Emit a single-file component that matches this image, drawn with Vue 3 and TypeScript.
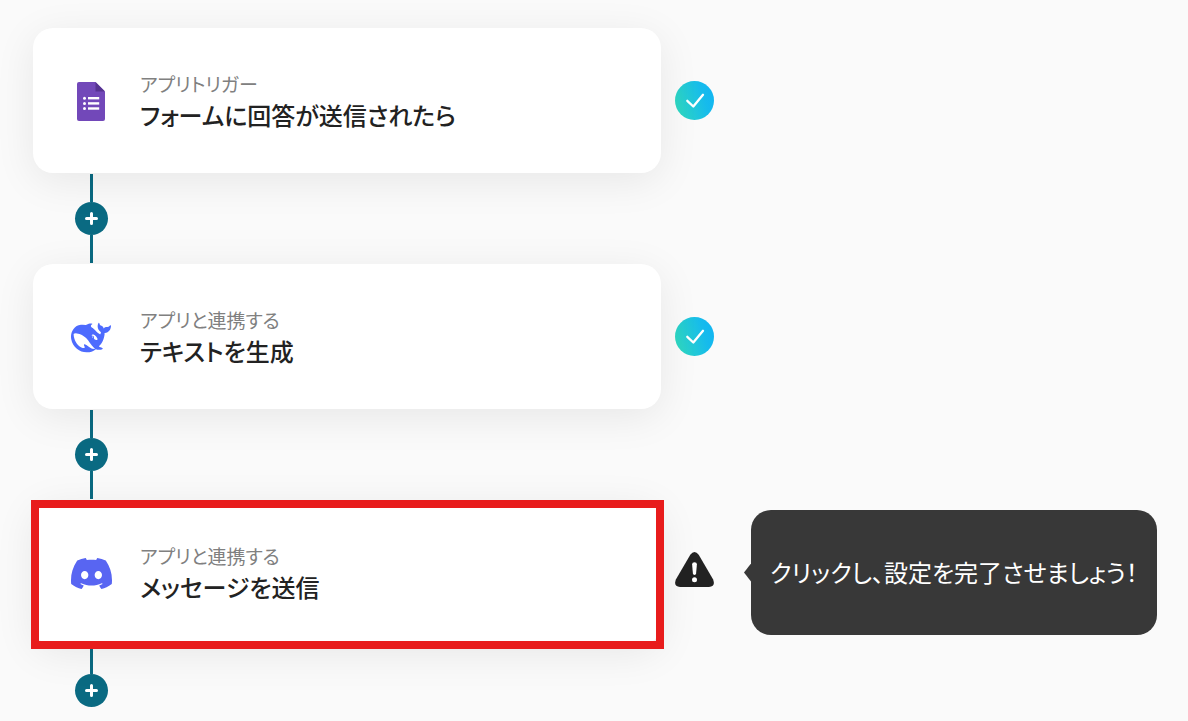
<script setup lang="ts">
type AppIcon = 'forms' | 'deepseek' | 'discord'

interface Step {
  id: number
  icon: AppIcon
  label: string
  title: string
  done: boolean
  hint?: string
}

const steps: Step[] = [
  { id: 1, icon: 'forms', label: 'アプリトリガー', title: 'フォームに回答が送信されたら', done: true },
  { id: 2, icon: 'deepseek', label: 'アプリと連携する', title: 'テキストを生成', done: true },
  {
    id: 3,
    icon: 'discord',
    label: 'アプリと連携する',
    title: 'メッセージを送信',
    done: false,
    hint: 'クリックし、設定を完了させましょう！',
  },
]
</script>

<template>
  <main class="flow">
    <section v-for="step in steps" :key="step.id" class="step">
      <div class="row">
        <button type="button" class="card" :class="{ highlighted: !step.done }">
          <span class="app-icon">
            <svg v-if="step.icon === 'forms'" width="28" height="39" viewBox="0 0 28 39" aria-hidden="true">
              <path fill="#7248b9" d="M2 0H18.5L28 9.5V37A2 2 0 0 1 26 39H2A2 2 0 0 1 0 37V2A2 2 0 0 1 2 0Z" />
              <path fill="#563391" d="M18.500 0L28 9.500H18.500Z" />
              <g fill="#fff">
                <circle cx="7.500" cy="16.200" r="1.500" />
                <circle cx="7.500" cy="21.400" r="1.500" />
                <circle cx="7.500" cy="26.500" r="1.500" />
                <rect x="11" y="15" width="11.200" height="2.400" />
                <rect x="11" y="20.200" width="11.200" height="2.400" />
                <rect x="11" y="25.300" width="11.200" height="2.400" />
              </g>
            </svg>
            <svg v-else-if="step.icon === 'deepseek'" width="40" height="40" viewBox="0 -0.5 24 24" aria-hidden="true">
              <path fill="#4d6bfe" d="M23.748 4.482c-.254-.124-.364.113-.512.234-.051.039-.094.09-.137.136-.372.397-.806.657-1.373.626-.829-.046-1.537.214-2.163.848-.133-.782-.575-1.248-1.247-1.548-.352-.156-.708-.311-.955-.65-.172-.241-.219-.51-.305-.774-.055-.16-.11-.323-.293-.35-.2-.031-.278.136-.356.276-.313.572-.434 1.202-.422 1.84.027 1.436.633 2.58 1.838 3.393.137.093.172.187.129.323-.082.28-.18.552-.266.833-.055.179-.137.217-.329.14a5.526 5.526 0 01-1.736-1.18c-.857-.828-1.631-1.742-2.597-2.458a11.365 11.365 0 00-.689-.471c-.985-.957.13-1.743.388-1.836.27-.098.093-.432-.779-.428-.872.004-1.67.295-2.687.684a3.055 3.055 0 01-.465.137 9.597 9.597 0 00-2.883-.102c-1.885.21-3.39 1.102-4.497 2.623C.082 8.606-.231 10.684.152 12.85c.403 2.284 1.569 4.175 3.36 5.653 1.858 1.533 3.997 2.284 6.438 2.14 1.482-.085 3.133-.284 4.994-1.86.47.234.962.327 1.78.397.63.059 1.236-.03 1.705-.128.735-.156.684-.837.419-.961-2.155-1.004-1.682-.595-2.113-.926 1.096-1.296 2.746-2.642 3.392-7.003.05-.347.007-.565 0-.845-.004-.17.035-.237.23-.256a4.173 4.173 0 001.545-.475c1.396-.763 1.96-2.015 2.093-3.517.02-.23-.004-.467-.247-.588zM11.581 18c-2.089-1.642-3.102-2.183-3.52-2.16-.392.024-.321.471-.235.763.09.288.207.486.371.739.114.167.192.416-.113.603-.673.416-1.842-.14-1.897-.167-1.361-.802-2.5-1.86-3.301-3.307-.774-1.393-1.224-2.887-1.298-4.482-.02-.386.093-.522.477-.592a4.696 4.696 0 011.529-.039c2.132.312 3.946 1.265 5.468 2.774.868.86 1.525 1.887 2.202 2.891.72 1.066 1.494 2.082 2.48 2.914.348.292.625.514.891.677-.802.09-2.14.11-3.054-.614zm1-6.44a.306.306 0 01.415-.287.302.302 0 01.2.288.306.306 0 01-.31.307.303.303 0 01-.304-.308zm3.11 1.596c-.2.081-.399.151-.59.16a1.245 1.245 0 01-.798-.254c-.274-.23-.47-.358-.552-.758a1.73 1.73 0 01.016-.588c.07-.327-.008-.537-.239-.727-.187-.156-.426-.199-.688-.199a.559.559 0 01-.254-.078c-.11-.054-.2-.19-.114-.358.028-.054.16-.186.192-.21.356-.202.767-.136 1.146.016.352.144.618.408 1.001.782.391.451.462.576.685.914.176.265.336.537.445.848.067.195-.019.354-.25.452z" />
            </svg>
            <svg v-else width="41" height="41" viewBox="0 0 24 24" aria-hidden="true">
              <path fill="#5865f2" d="M20.317 4.3698a19.7913 19.7913 0 00-4.8851-1.5152.0741.0741 0 00-.0785.0371c-.211.3753-.4447.8648-.6083 1.2495-1.8447-.2762-3.68-.2762-5.4868 0-.1636-.3933-.4058-.8742-.6177-1.2495a.077.077 0 00-.0785-.037 19.7363 19.7363 0 00-4.8852 1.515.0699.0699 0 00-.0321.0277C.5334 9.0458-.319 13.5799.0992 18.0578a.0824.0824 0 00.0312.0561c2.0528 1.5076 4.0413 2.4228 5.9929 3.0294a.0777.0777 0 00.0842-.0276c.4616-.6304.8731-1.2952 1.226-1.9942a.076.076 0 00-.0416-.1057c-.6528-.2476-1.2743-.5495-1.8722-.8923a.077.077 0 01-.0076-.1277c.1258-.0943.2517-.1923.3718-.2914a.0743.0743 0 01.0776-.0105c3.9278 1.7933 8.18 1.7933 12.0614 0a.0739.0739 0 01.0785.0095c.1202.099.246.1981.3728.2924a.077.077 0 01-.0066.1276 12.2986 12.2986 0 01-1.873.8914.0766.0766 0 00-.0407.1067c.3604.698.7719 1.3628 1.225 1.9932a.076.076 0 00.0842.0286c1.961-.6067 3.9495-1.5219 6.0023-3.0294a.077.077 0 00.0313-.0552c.5004-5.177-.8382-9.6739-3.5485-13.6604a.061.061 0 00-.0312-.0286zM8.02 15.3312c-1.1825 0-2.1569-1.0857-2.1569-2.419 0-1.3332.9555-2.4189 2.157-2.4189 1.2108 0 2.1757 1.0952 2.1568 2.419 0 1.3332-.9555 2.4189-2.1569 2.4189zm7.9748 0c-1.1825 0-2.1569-1.0857-2.1569-2.419 0-1.3332.9554-2.4189 2.1569-2.4189 1.2108 0 2.1757 1.0952 2.1568 2.419 0 1.3332-.946 2.4189-2.1568 2.4189Z" />
            </svg>
          </span>
          <span class="text">
            <span class="label">{{ step.label }}</span>
            <span class="title">{{ step.title }}</span>
          </span>
        </button>

        <svg v-if="step.done" class="status" width="39" height="39" viewBox="0 0 39 39" aria-hidden="true">
          <defs>
            <linearGradient :id="`done-${step.id}`" x1="0" y1="0.65" x2="1" y2="0.35">
              <stop offset="0" stop-color="#2fd8c0" />
              <stop offset="0.75" stop-color="#16bbec" />
              <stop offset="1" stop-color="#12b6f2" />
            </linearGradient>
          </defs>
          <circle cx="19.500" cy="19.500" r="19.500" :fill="`url(#done-${step.id})`" />
          <path d="M12.300 19.800L18.300 25.500L28 13.800" fill="none" stroke="#fff" stroke-width="2.300" stroke-linecap="round" stroke-linejoin="round" />
        </svg>
        <svg v-else class="status warning" width="39" height="36" viewBox="0 0 39 36" aria-hidden="true">
          <path fill="#222" d="M15.300 2.800Q19.500 -2.800 23.700 2.800L38 27.300Q41 34.500 34 35H5Q-2 34.500 1 27.300Z" />
          <path fill="#fff" d="M17.100 12.300Q17.200 10.200 19.500 10.200Q21.800 10.200 21.900 12.300L21.100 21.600Q20.900 23 19.500 23Q18.100 23 17.900 21.600Z" />
          <circle cx="19.500" cy="27.800" r="2.500" fill="#fff" />
        </svg>

        <p v-if="step.hint" class="tooltip">{{ step.hint }}</p>
      </div>

      <div class="connector" :class="{ last: step.id === steps.length }">
        <span class="line"></span>
        <button type="button" class="add" aria-label="ステップを追加">
          <svg width="13" height="13" viewBox="0 0 13 13" aria-hidden="true">
            <path d="M6.500 1.500V11.500M1.500 6.500H11.500" stroke="#fff" stroke-width="3" stroke-linecap="round" />
          </svg>
        </button>
        <span class="line"></span>
      </div>
    </section>
  </main>
</template>

<style>
body {
  margin: 0;
  background: #fafafa;
}
</style>

<style scoped>
.flow {
  box-sizing: border-box;
  padding: 28px 30px 14px 33px;
  font-family: "Noto Sans CJK JP", "Noto Sans", sans-serif;
  font-feature-settings: "palt";
  color: #222;
}

.row {
  display: flex;
  align-items: center;
}

.card {
  position: relative;
  box-sizing: border-box;
  display: flex;
  align-items: center;
  gap: 28px;
  flex: 0 1 628px;
  min-width: 0;
  padding: 42px 37px 41px;
  border: 0;
  border-radius: 20px;
  background: #fff;
  box-shadow: 0 8px 40px rgba(0, 0, 0, 0.08);
  font: inherit;
  color: inherit;
  text-align: left;
  cursor: pointer;
}

.card.highlighted::after {
  content: "";
  position: absolute;
  inset: 0 -3px -4px -2px;
  border: 8px solid #e81c1c;
}

.app-icon {
  display: flex;
  justify-content: center;
  flex: 0 0 42px;
}

.text {
  display: flex;
  flex-direction: column;
}

.label {
  font-size: 19px;
  line-height: 27px;
  color: #808080;
}

.title {
  font-size: 24px;
  line-height: 35px;
  font-weight: 500;
}

.status {
  flex: none;
  margin-left: 14px;
}

.warning {
  margin-bottom: 6px;
}

.tooltip {
  position: relative;
  flex: none;
  margin: 0 0 0 37px;
  padding: 42px 19px 43px;
  border-radius: 20px;
  background: #383838;
  color: #fff;
  font-size: 24px;
  line-height: 40px;
  white-space: nowrap;
}

.tooltip::before {
  content: "";
  position: absolute;
  top: 50%;
  right: 100%;
  width: 7px;
  height: 18px;
  margin-top: -9px;
  background: #383838;
  clip-path: polygon(100% 0, 0 50%, 100% 100%);
}

.connector {
  display: flex;
  flex-direction: column;
  align-items: center;
  width: 33px;
  margin-left: 42px;
  padding: 1px 0;
}

.line {
  width: 3px;
  height: 28px;
  background: #0a6a82;
}

.add {
  display: flex;
  align-items: center;
  justify-content: center;
  width: 33px;
  height: 33px;
  padding: 0;
  border: 0;
  border-radius: 50%;
  background: #0a6a82;
  cursor: pointer;
}

.last .line:last-child {
  display: none;
}
</style>
